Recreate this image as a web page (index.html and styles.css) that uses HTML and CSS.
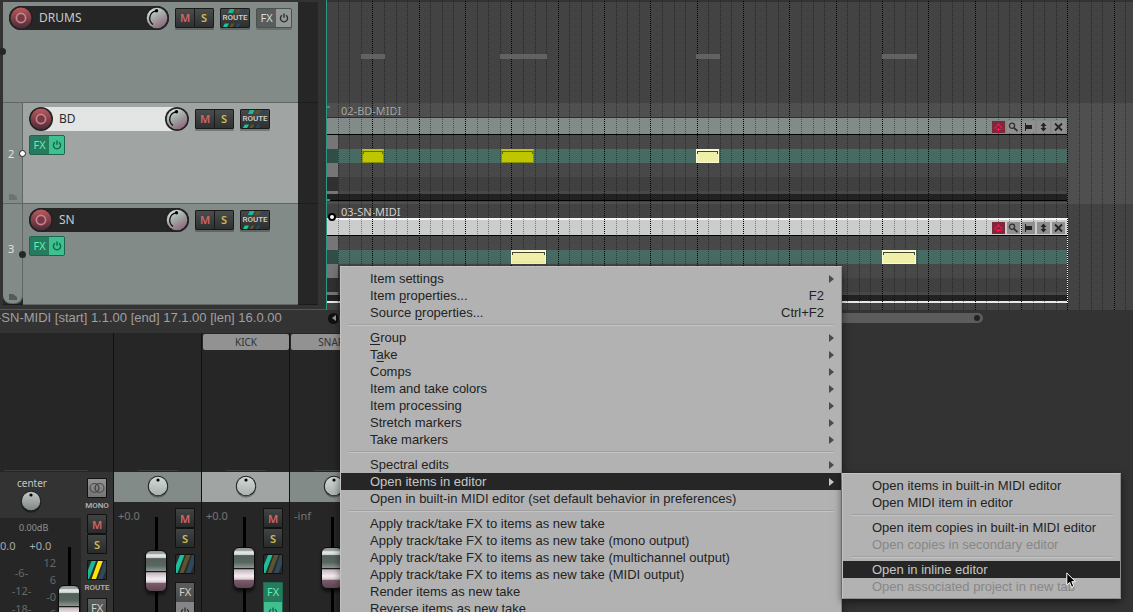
FILE: index.html
```html
<!DOCTYPE html>
<html lang="en">
<head>
<meta charset="utf-8">
<title>Arrange view</title>
<link rel="stylesheet" href="styles.css">
</head>
<body>
<svg class="defs" aria-hidden="true">
  <defs>
    <linearGradient id="recFill" x1="0" y1="0" x2="0" y2="1"><stop offset="0" stop-color="#bb5a60"/><stop offset=".5" stop-color="#84404a"/><stop offset="1" stop-color="#4c2b38"/></linearGradient>
    <linearGradient id="knobFill" x1="0" y1="0" x2=".6" y2="1"><stop offset="0" stop-color="#f2f6f4"/><stop offset=".45" stop-color="#a9b3af"/><stop offset="1" stop-color="#8d6c7e"/></linearGradient>
    <linearGradient id="panFill" x1="0" y1="0" x2="0" y2="1"><stop offset="0" stop-color="#c0c7c4"/><stop offset="1" stop-color="#7f8784"/></linearGradient>
    <linearGradient id="panLight" x1="0" y1="0" x2="0" y2="1"><stop offset="0" stop-color="#d3d8d6"/><stop offset="1" stop-color="#a8b2af"/></linearGradient>
    <pattern id="gridMinor" width="139" height="2" patternUnits="userSpaceOnUse">
      <path fill="#000" fill-opacity=".42" d="M12 1h1v1h-1zM23 1h1v1h-1zM35 1h1v1h-1zM58 1h1v1h-1zM70 1h1v1h-1zM81 1h1v1h-1zM104 1h1v1h-1zM116 1h1v1h-1zM127 1h1v1h-1z"/>
      <path fill="#000" d="M0 1h1v1h-1zM46 1h1v1h-1zM93 1h1v1h-1z"/>
    </pattern>
    <symbol id="rec" viewBox="0 0 24 24"><circle cx="12" cy="12" r="12" fill="#222"/><circle cx="12" cy="12" r="10.4" fill="url(#recFill)"/><circle cx="12" cy="12" r="4.6" fill="#7a3844" stroke="#c0878c" stroke-width="1.7"/></symbol>
    <symbol id="vol" viewBox="0 0 24 24"><circle cx="12" cy="12" r="12" fill="#222"/><circle cx="12" cy="12" r="10.3" fill="url(#knobFill)"/><path d="M8 18.500A7.600 7.600 0 0 1 11 4.800" fill="none" stroke="#111" stroke-width="1.300"/><circle cx="11.500" cy="4.800" r="1.700" fill="#000"/></symbol>
    <symbol id="pan" viewBox="0 0 22 23"><circle cx="11" cy="12.500" r="10.300" fill="#000" opacity=".3"/><circle cx="11" cy="11" r="10.200" fill="#222"/><circle cx="11" cy="11" r="9.200" fill="url(#panLight)"/><circle cx="11" cy="5" r="1.600" fill="#000"/></symbol>
    <symbol id="panDim" viewBox="0 0 22 23"><circle cx="11" cy="12.500" r="10.300" fill="#000" opacity=".4"/><circle cx="11" cy="11" r="10.200" fill="#222"/><circle cx="11" cy="11" r="9.200" fill="url(#panFill)"/><circle cx="11" cy="5" r="1.600" fill="#000"/></symbol>
    <symbol id="power" viewBox="0 0 10 10"><path d="M3 2.300A3.600 3.600 0 1 0 7 2.300M5 .6V4.800" fill="none" stroke="currentColor" stroke-width="1.300"/></symbol>
    <symbol id="stripes" viewBox="0 0 28 18"><path d="M7 4 8.800 0H13.500L11.700 4z" fill="#1cb894"/><path d="M14 4 15.800 0H19.500L17.700 4z" fill="#5e5429"/><path d="M20 4 21.800 0H25.500L23.700 4z" fill="#2a4860"/><path d="M2 18 3.800 14.500H8L6.200 18z" fill="#1cc59c"/><path d="M8.500 18 10.300 14.500H13.500L11.700 18z" fill="#5e5429"/><path d="M14.500 18 16.300 14.500H19.500L17.700 18z" fill="#2a4860"/></symbol>
    <symbol id="routeDim" viewBox="0 0 18 18"><rect width="18" height="18" fill="#292c2b"/><path d="M4 0H8.500L1.500 18H0V10z" fill="#1bbf9a"/><path d="M10 0H14.500L7.500 18H3.500z" fill="#5b5430"/><path d="M16 0H18V9L14.500 18H10z" fill="#30495a"/></symbol>
    <symbol id="routeLit" viewBox="0 0 18 18"><rect width="18" height="18" fill="#292c2b"/><path d="M3.500 0H8L1 18H0V9z" fill="#1bb998"/><path d="M10 0H14.800L8 18H3.500z" fill="#ffe20a"/><path d="M16.500 0H18V9L14.500 18H10z" fill="#30495a"/></symbol>
    <symbol id="mono" viewBox="0 0 18 18"><g fill="none" stroke="#4a4a4a" stroke-width="1.100"><circle cx="6.500" cy="9" r="4.500"/><circle cx="11.500" cy="9" r="4.500"/><ellipse cx="9" cy="9" rx="1.700" ry="3.500"/></g></symbol>
    <symbol id="iArc" viewBox="0 0 13 12"><path d="M2.500 7.500 6.500 3 10.500 7.500" fill="none" stroke="#ff1350" stroke-width="1.300" stroke-dasharray="2.400 .5"/><path d="M6 7h1v1h2v1H7v1H6V9H4V8h2z" fill="#ff1350"/></symbol>
    <symbol id="iZoom" viewBox="0 0 13 12"><circle cx="5" cy="4.800" r="2.600" fill="none" stroke="#303030" stroke-width="1.300"/><path d="M7 6.800 10.500 10" stroke="#303030" stroke-width="1.700"/></symbol>
    <symbol id="iFlag" viewBox="0 0 13 12"><path d="M3 2h1v8H3zM4 4h6v4H4z" fill="#222"/></symbol>
    <symbol id="iMove" viewBox="0 0 13 12"><path d="M6.500 1.500 9.500 5H7.500V7H9.500L6.500 10.500 3.500 7H5.500V5H3.500z" fill="#222"/></symbol>
    <symbol id="iClose" viewBox="0 0 13 12"><path d="M3 2.500 10 9.500M10 2.500 3 9.500" stroke="#222" stroke-width="1.800"/></symbol>
    <symbol id="folder" viewBox="0 0 8 6"><path d="M0 0H4L8 3V6H0z" fill="currentColor"/></symbol>
  </defs>
</svg>

<main class="app">
  <section class="workspace">
    <section class="tracks" aria-label="Tracks">
      <article class="track drums">
        <div class="panel">
          <div class="controls">
            <div class="name-pill"><svg class="round"><use href="#rec"/></svg><span class="name">DRUMS</span><svg class="round"><use href="#vol"/></svg></div>
            <div class="ms"><button class="m">M</button><button class="s">S</button></div>
            <button class="route"><svg><use href="#stripes"/></svg><span>ROUTE</span></button>
            <button class="fx"><span>FX</span><i><svg><use href="#power"/></svg></i></button>
          </div>
        </div>
        <span class="node top"></span>
      </article>
      <article class="track child selected">
        <div class="gutter"><span class="num">2</span><svg class="folder"><use href="#folder"/></svg></div>
        <div class="panel">
          <div class="controls">
            <div class="name-pill"><svg class="round"><use href="#rec"/></svg><span class="name">BD</span><svg class="round"><use href="#vol"/></svg></div>
            <div class="ms"><button class="m">M</button><button class="s">S</button></div>
            <button class="route"><svg><use href="#stripes"/></svg><span>ROUTE</span></button>
          </div>
          <button class="fx on"><span>FX</span><i><svg><use href="#power"/></svg></i></button>
        </div>
        <span class="node mid light"></span>
      </article>
      <article class="track child last">
        <div class="gutter"><span class="num">3</span><svg class="folder"><use href="#folder"/></svg></div>
        <div class="panel">
          <div class="controls">
            <div class="name-pill"><svg class="round"><use href="#rec"/></svg><span class="name">SN</span><svg class="round"><use href="#vol"/></svg></div>
            <div class="ms"><button class="m">M</button><button class="s">S</button></div>
            <button class="route"><svg><use href="#stripes"/></svg><span>ROUTE</span></button>
          </div>
          <button class="fx on"><span>FX</span><i><svg><use href="#power"/></svg></i></button>
        </div>
        <span class="node mid"></span>
      </article>
    </section>

    <section class="timeline" aria-label="Arrangement">
      <div class="lane lane-drums">
        <span class="ghost" style="left:35px;width:24px"></span>
        <span class="ghost" style="left:174px;width:47px"></span>
        <span class="ghost" style="left:370px;width:24px"></span>
        <span class="ghost" style="left:556px;width:35px"></span>
      </div>
      <div class="lane lane-bd">
        <div class="item">
          <div class="item-name">02-BD-MIDI</div>
          <div class="item-head"></div>
          <div class="roll"><b></b><b class="teal"></b><b></b><b class="dark"></b><b class="thin"></b><b class="foot"></b></div>
          <span class="note olive" style="left:36px;width:22px"></span>
          <span class="note olive" style="left:175px;width:33px"></span>
          <span class="note" style="left:370px;width:23px"></span>
          <div class="tools"><button class="hot" aria-label="Envelope"><svg><use href="#iArc"/></svg></button><button aria-label="Zoom"><svg><use href="#iZoom"/></svg></button><button aria-label="Marker"><svg><use href="#iFlag"/></svg></button><button aria-label="Height"><svg><use href="#iMove"/></svg></button><button aria-label="Close"><svg><use href="#iClose"/></svg></button></div>
        </div>
      </div>
      <div class="lane lane-sn">
        <div class="item chosen">
          <div class="item-name">03-SN-MIDI</div>
          <div class="item-head"></div>
          <div class="roll"><b></b><b class="teal"></b><b></b><b class="dark"></b><b class="thin"></b><b class="foot"></b></div>
          <span class="note" style="left:185px;width:35px"></span>
          <span class="note" style="left:556px;width:34px"></span>
          <span class="handle"></span>
          <div class="tools"><button class="hot" aria-label="Envelope"><svg><use href="#iArc"/></svg></button><button aria-label="Zoom"><svg><use href="#iZoom"/></svg></button><button aria-label="Marker"><svg><use href="#iFlag"/></svg></button><button aria-label="Height"><svg><use href="#iMove"/></svg></button><button aria-label="Close"><svg><use href="#iClose"/></svg></button></div>
        </div>
      </div>
      <svg class="grid" aria-hidden="true"><rect width="100%" height="100%" fill="url(#gridMinor)"/></svg>
    </section>
  </section>

  <section class="info">
    <div class="info-text">-SN-MIDI [start] 1.1.00 [end] 17.1.00 [len] 16.0.00</div>
    <div class="scroll"><button class="scroll-left" aria-label="Scroll left"></button><div class="thumb"><span></span></div></div>
  </section>

  <section class="mixer" aria-label="Mixer">
    <div class="master">
      <div class="rule"></div>
      <div class="master-body">
        <div class="master-left">
          <div class="center-label">center</div>
          <svg class="pan"><use href="#panDim"/></svg>
          <div class="meter">
            <div class="db">0.00dB</div>
            <div class="peaks"><span>0.0</span><span>+0.0</span></div>
            <div class="scales">
              <div class="scale-a"><span>-6-</span><span>-12-</span><span>-18-</span></div>
              <div class="scale-b"><span>12</span><span>6</span><span>-0</span><span>6</span></div>
              <input class="fader" type="range" aria-label="Master volume" value="51">
            </div>
          </div>
        </div>
        <div class="stack">
          <button class="sq mono" aria-label="Mono"><svg><use href="#mono"/></svg></button>
          <span class="cap">MONO</span>
          <button class="sq m">M</button><button class="sq s">S</button>
          <button class="sq rt" aria-label="Route"><svg><use href="#routeLit"/></svg></button>
          <span class="cap">ROUTE</span>
          <button class="vfx"><span>FX</span><i><svg><use href="#power"/></svg></i></button>
        </div>
      </div>
    </div>
    <div class="strip">
      <div class="title"></div>
      <div class="rule"></div>
      <div class="pan-bar"><svg class="pan"><use href="#pan"/></svg></div>
      <div class="strip-body">
        <span class="level">+0.0</span>
        <input class="fader" type="range" aria-label="Drums volume" value="58">
        <div class="stack"><button class="sq m">M</button><button class="sq s">S</button><button class="sq rt" aria-label="Route"><svg><use href="#routeDim"/></svg></button><button class="vfx"><span>FX</span><i><svg><use href="#power"/></svg></i></button></div>
      </div>
    </div>
    <div class="strip picked">
      <div class="title named">KICK</div>
      <div class="rule"></div>
      <div class="pan-bar"><svg class="pan"><use href="#pan"/></svg></div>
      <div class="strip-body">
        <span class="level">+0.0</span>
        <input class="fader" type="range" aria-label="Kick volume" value="62">
        <div class="stack"><button class="sq m">M</button><button class="sq s">S</button><button class="sq rt" aria-label="Route"><svg><use href="#routeDim"/></svg></button><button class="vfx on"><span>FX</span><i><svg><use href="#power"/></svg></i></button></div>
      </div>
    </div>
    <div class="strip">
      <div class="title named">SNARE</div>
      <div class="rule"></div>
      <div class="pan-bar"><svg class="pan"><use href="#pan"/></svg></div>
      <div class="strip-body">
        <span class="level">-inf</span>
        <input class="fader" type="range" aria-label="Snare volume" value="62">
        <div class="stack"></div>
      </div>
    </div>
  </section>
</main>

<div class="menu main-menu" role="menu">
  <button role="menuitem" class="sub">Item settings</button>
  <button role="menuitem"><span>Item <u>p</u>roperties...</span><kbd>F2</kbd></button>
  <button role="menuitem"><span>Source <u>p</u>roperties...</span><kbd>Ctrl+F2</kbd></button>
  <hr>
  <button role="menuitem" class="sub"><span><u>G</u>roup</span></button>
  <button role="menuitem" class="sub"><span>T<u>a</u>ke</span></button>
  <button role="menuitem" class="sub">Comps</button>
  <button role="menuitem" class="sub">Item and take colors</button>
  <button role="menuitem" class="sub">Item processing</button>
  <button role="menuitem" class="sub">Stretch markers</button>
  <button role="menuitem" class="sub">Take markers</button>
  <hr>
  <button role="menuitem" class="sub">Spectral edits</button>
  <button role="menuitem" class="sub active">Open items in editor</button>
  <button role="menuitem">Open in built-in MIDI editor (set default behavior in preferences)</button>
  <hr>
  <button role="menuitem">Apply track/take FX to items as new take</button>
  <button role="menuitem">Apply track/take FX to items as new take (mono output)</button>
  <button role="menuitem">Apply track/take FX to items as new take (multichannel output)</button>
  <button role="menuitem">Apply track/take FX to items as new take (MIDI output)</button>
  <button role="menuitem">Render items as new take</button>
  <button role="menuitem">Reverse items as new take</button>
</div>
<div class="menu sub-menu" role="menu">
  <button role="menuitem">Open items in built-in MIDI editor</button>
  <button role="menuitem">Open MIDI item in editor</button>
  <hr>
  <button role="menuitem">Open item copies in built-in MIDI editor</button>
  <button role="menuitem" disabled>Open copies in secondary editor</button>
  <hr>
  <button role="menuitem" class="active">Open in inline editor</button>
  <button role="menuitem" disabled>Open associated project in new tab</button>
</div>
<svg class="cursor" viewBox="0 0 11 17" aria-hidden="true"><path d="M.8 1V13L3.600 10.400 5.600 15.300 7.800 14.300 5.800 9.700H9.500z" fill="#000" stroke="#fff" stroke-width="1"/></svg>
</body>
</html>
```

FILE: styles.css
```css
* { box-sizing: border-box; }
body { margin: 0; height: 100vh; overflow: hidden; position: relative; background: #333; font-family: "Noto Sans", "Open Sans", sans-serif; }
button { margin: 0; padding: 0; border: 0; font: inherit; color: inherit; background: none; }
svg { display: block; }
.defs { position: absolute; width: 0; height: 0; }
.app { height: 100vh; display: flex; flex-direction: column; overflow: hidden; }

/* track panel */
.workspace { display: flex; flex: none; }
.tracks { width: 326px; flex: none; padding: 2px 8px 4px 3px; background: #333; border-bottom: 1px solid #555; }
.track { position: relative; display: flex; height: 101px; background: #262626; padding-right: 20px; border-bottom: 1px solid #1b1b1b; }
.panel { flex: 1; background: #838b88; padding: 4px 6px; box-shadow: 0 1px 0 #5f6664; }
.gutter { width: 20px; flex: none; position: relative; display: flex; align-items: center; background: #838b88; border-right: 1px solid #5f6664; box-shadow: 0 1px 0 #5f6664; }
.last .gutter { border-radius: 0 0 8px 8px; margin-bottom: 1px; }
.selected .panel { background: #a0a5a4; }
.num { padding-left: 5px; font-size: 11px; color: #e0e3e2; }
.last .num { padding-bottom: 10px; }
.folder { position: absolute; left: 6px; bottom: 3px; width: 8px; height: 6px; color: #6c7371; }
.last .folder { color: #555b59; }
.controls { display: flex; align-items: center; height: 24px; margin-bottom: 4px; }
.name-pill { display: flex; align-items: center; justify-content: space-between; width: 160px; height: 24px; margin-right: 6px; border-radius: 12px; background: #262626; color: #c8cac9; font-size: 12px; }
.selected .name-pill { background: #e3e5e4; color: #2b2b2b; }
.name { flex: 1; padding-left: 6px; line-height: 24px; }
.round { width: 24px; height: 24px; }
.ms { display: flex; margin-right: 6px; box-shadow: 0 2px 0 #0004; border: 1px solid #1a1a1a; border-radius: 1px; }
.ms button { width: 19px; height: 18px; font-size: 11px; font-weight: 600; line-height: 18px; background: linear-gradient(#4b4d4d, #2f3131); }
.ms .m { width: 18px; }
.ms .s { border-left: 1px solid #1a1a1a; }
.m { color: #cf6565; }
.s { color: #cdbb55; }
.route { position: relative; width: 30px; height: 20px; margin-right: 6px; border: 1px solid #1a1a1a; border-radius: 1px; background: linear-gradient(#47494a, #2e3030); box-shadow: 0 2px 0 #0004; color: #cfd1d0; font: 500 8px/18px Roboto, sans-serif; }
.route svg { position: absolute; inset: 0; width: 28px; height: 18px; }
.route span { position: relative; }
.fx { display: flex; width: 36px; height: 20px; border: 1px solid #4b4f4e; border-radius: 2px; background: #585d5b; color: #d7d9d8; font-size: 11px; line-height: 18px; box-shadow: 0 2px 0 #0003; overflow: hidden; }
.fx span { width: 19px; }
.fx i, .vfx i { flex: 1; display: grid; place-items: center; background: #929997; color: #2b2b2b; height: 18px; }
.fx svg, .vfx svg { width: 10px; height: 10px; }
.fx.on { border-color: #17684d; background: #277a5d; color: #5df0b8; box-shadow: none; }
.fx.on i, .vfx.on i { background: #3fc08f; color: #145c42; }
.node { position: absolute; width: 7px; height: 7px; border-radius: 50%; background: #262626; }
.node.top { left: -4px; top: 46px; }
.node.mid { left: 16px; top: 47px; }
.node.light { background: #fff; border: 1px solid #222; }

/* arrangement */
.timeline { position: relative; flex: 1; overflow: hidden; padding-top: 2px; background: #333; border-left: 1px solid #2a9a86; }
.timeline > .grid { position: absolute; inset: 0 0 0 -1px; width: calc(100% + 1px); height: 100%; }
.lane { position: relative; height: 101px; background: #434343; }
.lane-bd { background: #4f4f4f; }
.lane-bd::before, .lane-bd::after { content: ""; position: absolute; z-index: 3; left: 0; width: 3px; height: 2px; background: #2a9a86; }
.lane-bd::before { top: 3px; }
.lane-bd::after { bottom: 3px; }
.lane-sn { height: 106px; }
.ghost { position: absolute; top: 52px; height: 5px; background: #626262; z-index: 2; margin-left: -1px; }
.item { position: relative; width: 740px; height: 99px; background: #434343; }
.lane-bd .item-name { background: #4f4f4f; }
.item-name { height: 14px; padding-left: 14px; color: #a5a5a5; font-size: 11px; line-height: 16px; }
.item-head { height: 18px; background: #838b88; border-top: 1px solid #2e2e2e; border-bottom: 1px solid #000; }
.chosen .item-name { color: #d0d0d0; }
.chosen .item-head { background: #cbcdcc; border-top: 2px solid #f4f4f4; }
.chosen::after { content: ""; position: absolute; right: -1px; top: 14px; height: 85px; border-right: 1px dotted #fff; z-index: 3; }
.roll b { display: block; height: 14px; background: #484848; border-left: 11px solid #767676; }
.roll .teal { background: #476a63; border-left-color: #324d47; }
.roll .dark { background: #404040; border-left-color: #303030; }
.roll .thin { height: 3px; }
.roll .foot { height: 7px; background: #222; border-left: 0; border-bottom: 1px solid #000; }
.chosen .roll .foot { border-bottom: 2px solid #e8e8e8; height: 8px; }
.note { position: absolute; top: 46px; height: 14px; margin-left: -1px; background: #efefa8; border: 1px solid #fbfbd8; border-top-width: 2px; z-index: 2; }
.note::before { content: ""; position: absolute; left: 0; right: 0; top: 0; height: 2px; border: 1px solid #44442a; border-bottom: 0; }
.olive { background: #bdc600; border-color: #888e10; border-top: 2px solid #bdc600; }
.olive::before { border-color: #666b00; }
.handle { position: absolute; left: 1px; top: 9px; width: 8px; height: 8px; border: 2px solid #000; border-radius: 50%; background: #fff; z-index: 3; }
.tools { position: absolute; right: 2px; top: 18px; display: flex; gap: 2px; z-index: 3; }
.tools button { width: 13px; height: 12px; background: #909090; }
.tools .hot { background: #7b2a3b; }
.tools svg { width: 13px; height: 12px; }

/* info line and scrollbar */
.info { display: flex; flex: none; height: 23px; background: #333; }
.info-text { width: 326px; flex: none; overflow: hidden; white-space: nowrap; text-indent: -3px; color: #a0a0a0; font: 13px/15px "Liberation Sans", sans-serif; }
.scroll { flex: 1; display: flex; align-items: center; height: 16px; padding-left: 2px; }
.scroll-left { width: 11px; height: 11px; border-radius: 50%; background: #111; display: grid; place-items: center; }
.scroll-left::before { content: ""; border: 3px solid transparent; border-left-width: 0; border-right: 4px solid #999; }
.thumb { width: 80%; height: 10px; border-radius: 5px; background: #5c5c5c; display: flex; justify-content: flex-end; align-items: center; padding-right: 3px; }
.thumb span { width: 6px; height: 6px; border-radius: 50%; background: #222; }

/* mixer */
.mixer { flex: 1; display: flex; min-height: 0; overflow: hidden; background: #333; }
.master { width: 114px; flex: none; background: #262626; border-right: 1px solid #111; padding-top: 137px; }
.rule { height: 1px; width: 84px; margin: 0 0 1px 4px; background: #3c3c3c; flex: none; }
.master-body { display: flex; background: #333; height: 200px; }
.master-left { width: 81px; display: flex; flex-direction: column; align-items: center; padding-top: 4px; }
.center-label { width: 100%; padding-left: 17px; color: #c4c4c4; font-size: 10px; line-height: 14px; }
.pan { width: 22px; height: 23px; flex: none; }
.master-left .pan { margin: 0 20px 0 0; }
.meter { width: 100%; flex: 1; margin-top: 5px; padding-top: 3px; background: #262626; color: #a8a8a8; font-size: 11px; }
.db { padding-left: 19px; font-size: 9px; line-height: 14px; color: #929292; }
.peaks { display: flex; gap: 14px; line-height: 22px; }
.scales { display: flex; color: #686868; line-height: 17px; margin-top: -10px; }
.scale-a { width: 32px; padding: 17px 0 0 11px; text-align: center; display: flex; flex-direction: column; line-height: 18px; white-space: nowrap; }
.scale-b { width: 26px; padding: 7px 2px 0 0; text-align: right; display: flex; flex-direction: column; }
.stack { display: flex; flex-direction: column; align-items: center; width: 20px; }
.master .stack { margin-left: 6px; padding-top: 6px; }
.sq { width: 20px; height: 20px; border: 1px solid #111; border-radius: 1px; background: linear-gradient(#424444, #292b2b); font-size: 11px; font-weight: 600; line-height: 17px; flex: none; }
.sq svg { width: 18px; height: 18px; }
.mono { background: linear-gradient(#949494, #757575); }
.cap { color: #b5b5b5; height: 16px; font: 500 8px/16px Roboto, sans-serif; }
.rt { margin-top: 6px; }
.vfx { width: 20px; height: 40px; margin-top: 8px; border: 1px solid #151515; flex: none; color: #d0d0d0; font-size: 11px; line-height: 18px; background: linear-gradient(#5c5e5e, #333); display: flex; flex-direction: column; }
.master .vfx { margin-top: 2px; }
.vfx span { width: 18px; height: 19px; }
.vfx i { width: 18px; flex: none; height: 19px; background: #858585; }
.vfx.on { background: #277a5d; color: #5df0b8; border-color: #17684d; }
.strip { width: 88px; flex: none; background: #262626; border-right: 1px solid #111; display: flex; flex-direction: column; }
.title { height: 16px; flex: none; margin: 1px 0 120px 1px; border-radius: 2px; text-align: center; font-size: 10px; line-height: 16px; color: #333; }
.named { background: #929292; }
.strip .rule { width: 40px; margin-left: 24px; }
.pan-bar { height: 30px; flex: none; background: #838b88; display: grid; justify-items: center; padding-top: 3px; }
.picked .pan-bar { background: #a0a5a4; }
.strip-body { display: flex; padding-top: 6px; }
.level { width: 31px; padding-left: 4px; color: #757575; font-size: 11px; line-height: 16px; }
.fader { appearance: none; -webkit-appearance: none; writing-mode: vertical-lr; direction: rtl; width: 22px; height: 120px; margin: 9px 8px 0 0; flex: none; background: linear-gradient(#000, #000) center / 3px 100% no-repeat; }
.scales .fader { margin: 0; }
.fader::-webkit-slider-runnable-track { width: 22px; height: 100%; }
.fader::-webkit-slider-thumb { -webkit-appearance: none; width: 22px; height: 42px; border: 1px solid #0c0c0c; border-radius: 6px; box-shadow: 0 3px 3px #0008; background: linear-gradient(#8f9693 0, #a3aaa7 8%, #e8ecea 9%, #d5dbd8 16%, #526059 19%, #57665f 36%, #8a938f 49%, #1c1c1c 50%, #1c1c1c 53%, #c3b5bd 54%, #f3edf0 70%, #d9cbd2 78%, #7b5c6b 81%, #5d4552 100%); }

/* menus */
.menu { position: absolute; z-index: 10; padding: 3px 0; background: #b2b2b2; border: 1px solid #c2c2c2; border-right-color: #8c8c8c; border-bottom-color: #8c8c8c; box-shadow: 0 3px 8px #0008; color: #222; font: 13px/17px "Liberation Sans", Arial, sans-serif; }
.main-menu { left: 340px; top: 266px; width: 502px; }
.sub-menu { left: 842px; top: 473px; width: 279px; }
.menu button { display: flex; justify-content: space-between; align-items: center; width: 100%; height: 17px; padding: 0 17px 0 29px; text-align: left; white-space: nowrap; }
.menu kbd { font: inherit; }
.menu u { text-underline-offset: 2px; }
.menu .sub { padding-right: 7px; }
.sub::after { content: ""; border: 4px solid transparent; border-left: 5px solid #4a4a4a; border-right: 0; }
.menu .active { background: #262626; color: #c6c6c6; }
.menu .active::after { border-left-color: #c6c6c6; }
.menu button:disabled { color: #878787; }
.menu hr { height: 2px; margin: 3px 7px 3px 8px; border: 0; background: #a0a0a0; border-bottom: 1px solid #c4c4c4; }
.cursor { position: absolute; z-index: 20; left: 1066px; top: 572px; width: 11px; height: 17px; }
```
